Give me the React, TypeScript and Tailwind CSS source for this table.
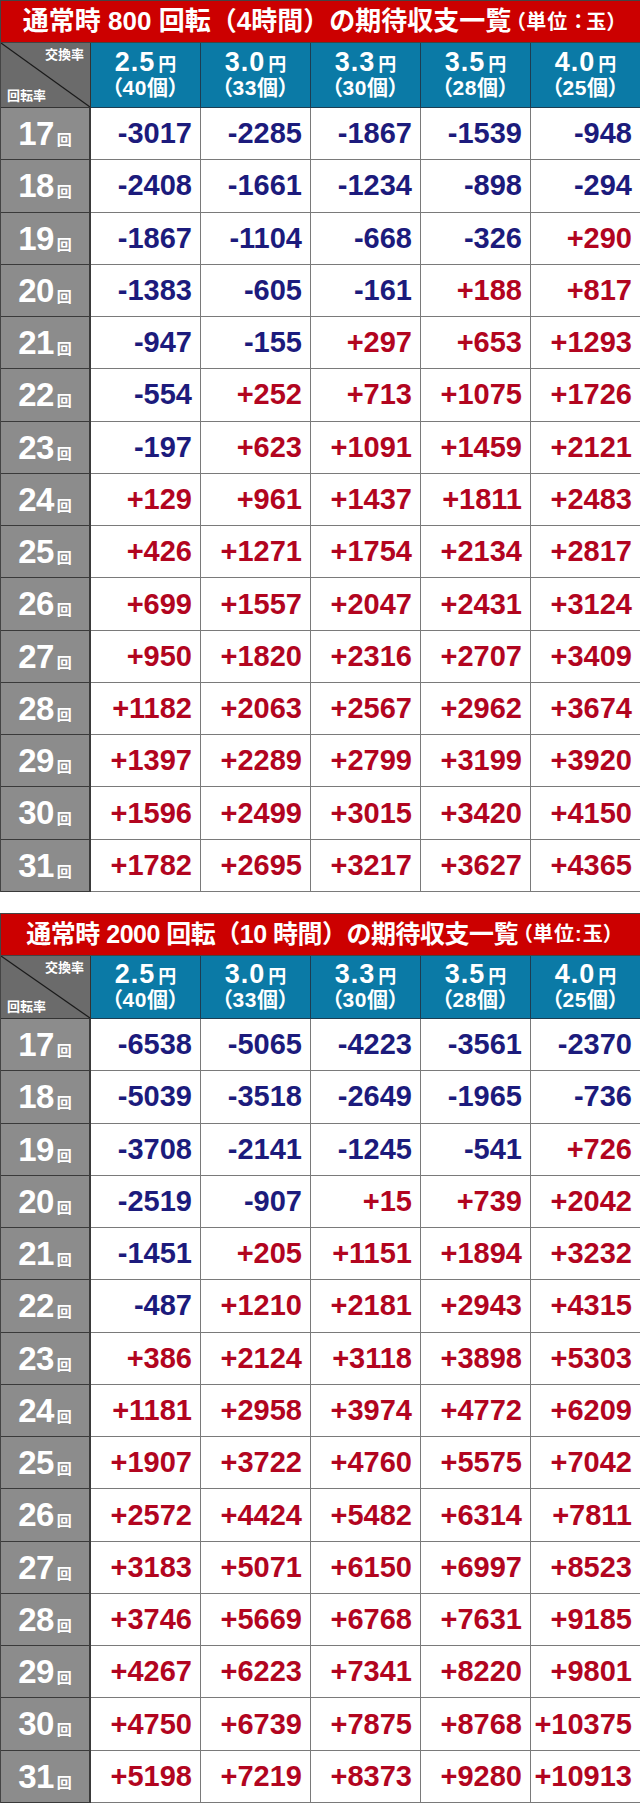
import React from 'react';

const FONT = "font-['Liberation_Sans','Noto_Sans_CJK_JP',sans-serif]";

const RATES = [
  { yen: '2.5', pcs: '40' },
  { yen: '3.0', pcs: '33' },
  { yen: '3.3', pcs: '30' },
  { yen: '3.5', pcs: '28' },
  { yen: '4.0', pcs: '25' },
];

const ROUNDS = [17, 18, 19, 20, 21, 22, 23, 24, 25, 26, 27, 28, 29, 30, 31];

// 800回転
const TABLE_800 = [
  [-3017, -2285, -1867, -1539, -948],
  [-2408, -1661, -1234, -898, -294],
  [-1867, -1104, -668, -326, 290],
  [-1383, -605, -161, 188, 817],
  [-947, -155, 297, 653, 1293],
  [-554, 252, 713, 1075, 1726],
  [-197, 623, 1091, 1459, 2121],
  [129, 961, 1437, 1811, 2483],
  [426, 1271, 1754, 2134, 2817],
  [699, 1557, 2047, 2431, 3124],
  [950, 1820, 2316, 2707, 3409],
  [1182, 2063, 2567, 2962, 3674],
  [1397, 2289, 2799, 3199, 3920],
  [1596, 2499, 3015, 3420, 4150],
  [1782, 2695, 3217, 3627, 4365],
];

// 2000回転
const TABLE_2000 = [
  [-6538, -5065, -4223, -3561, -2370],
  [-5039, -3518, -2649, -1965, -736],
  [-3708, -2141, -1245, -541, 726],
  [-2519, -907, 15, 739, 2042],
  [-1451, 205, 1151, 1894, 3232],
  [-487, 1210, 2181, 2943, 4315],
  [386, 2124, 3118, 3898, 5303],
  [1181, 2958, 3974, 4772, 6209],
  [1907, 3722, 4760, 5575, 7042],
  [2572, 4424, 5482, 6314, 7811],
  [3183, 5071, 6150, 6997, 8523],
  [3746, 5669, 6768, 7631, 9185],
  [4267, 6223, 7341, 8220, 9801],
  [4750, 6739, 7875, 8768, 10375],
  [5198, 7219, 8373, 9280, 10913],
];

function HeaderCorner() {
  return (
    <div className="relative flex flex-col justify-between bg-[#6b6b6b] border-r border-b border-[#333] px-[6px] py-[5px]">
      <svg className="absolute inset-0 w-full h-full" preserveAspectRatio="none" viewBox="0 0 100 100">
        <line x1="0" y1="0" x2="100" y2="100" stroke="#1a1a1a" strokeWidth="1.2" vectorEffect="non-scaling-stroke" />
      </svg>
      <span className="relative self-end text-[13px] font-bold text-white leading-none">交換率</span>
      <span className="relative self-start text-[13px] font-bold text-white leading-none">回転率</span>
    </div>
  );
}

function Table({ title, colon, data, headerH, condensed }: { title: string; colon: string; data: number[][]; headerH: string; condensed?: boolean }) {
  return (
    <div className={`${FONT} border-l border-t border-[#444] w-[640px]`}>
      <div className="h-[42px] bg-[#cc0000] border-b border-[#444] flex items-center justify-center text-white font-bold whitespace-nowrap">
        <span className={condensed ? 'text-[25px] tracking-[-0.5px]' : 'text-[26px]'}>{title}</span>
        <span className="text-[20px] [font-feature-settings:'palt'] tracking-[1px] ml-[4px]">
          （単位<span className={condensed ? '' : '[font-feature-settings:normal] tracking-[-2px]'}>{colon}</span>玉）
        </span>
      </div>
      <div className={`grid grid-cols-[90px_110px_110px_110px_110px_110px] ${headerH}`}>
        <HeaderCorner />
        {RATES.map((r) => (
          <div key={r.yen} className="bg-[#0b7aa6] border-r border-b border-[#1d3d52] flex flex-col items-center justify-center text-white font-bold">
            <div className="flex items-baseline leading-[22px]">
              <span className="text-[27px] tracking-[1px]">{r.yen}</span>
              <span className="text-[18px] ml-[3px]">円</span>
            </div>
            <div className="text-[21px] leading-[23px] [font-feature-settings:'palt'] tracking-[0.5px]">（{r.pcs}個）</div>
          </div>
        ))}
      </div>
      {ROUNDS.map((n, i) => (
        <div key={n} className="grid grid-cols-[90px_110px_110px_110px_110px_110px] h-[52.27px]">
          <div className="bg-[#8c8c8c] border-r-2 border-b border-[#3a3a3a] flex items-baseline justify-center text-white font-bold">
            <span className="text-[33px] leading-[51px] tracking-[-0.5px]">{n}</span>
            <span className="text-[15px] ml-[3px]">回</span>
          </div>
          {data[i].map((v, j) => (
            <div
              key={j}
              className={`bg-white border-r border-b border-[#7a7a7a] flex items-center justify-end pr-[8px] text-[29px] font-bold leading-none ${v < 0 ? 'text-[#1c1b7c]' : 'text-[#b2051f]'}`}
            >
              {v < 0 ? `-${Math.abs(v)}` : `+${v}`}
            </div>
          ))}
        </div>
      ))}
    </div>
  );
}

export default function App() {
  return (
    <div className="w-[640px] h-[1814px] bg-white">
      <Table title="通常時 800 回転（4時間）の期待収支一覧" colon="：" data={TABLE_800} headerH="h-[65px]" />
      <div className="h-[21px]" />
      <Table title="通常時 2000 回転（10 時間）の期待収支一覧" colon=":" data={TABLE_2000} headerH="h-[63px]" condensed />
    </div>
  );
}
